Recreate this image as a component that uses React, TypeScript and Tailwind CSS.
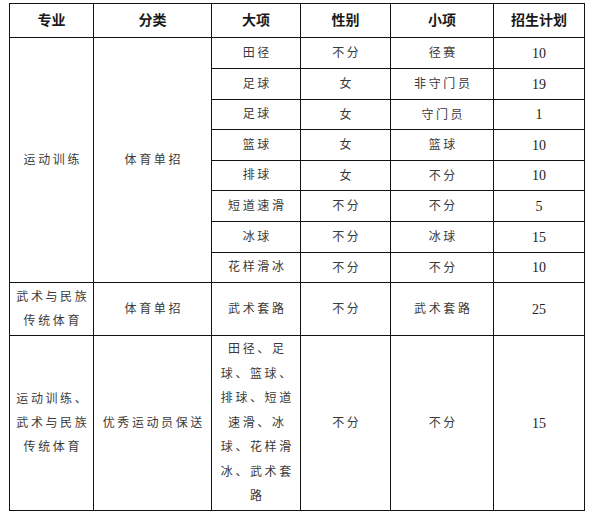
type Row = {
  major?: { text: string[]; span: number }
  kind?: { text: string; span: number }
  item: string[]
  gender: string
  sub: string
  plan: string
  h: string
}

const headers = ['专业', '分类', '大项', '性别', '小项', '招生计划']

const rows: Row[] = [
  { major: { text: ['运动训练'], span: 8 }, kind: { text: '体育单招', span: 8 }, item: ['田径'], gender: '不分', sub: '径赛', plan: '10', h: 'h-[31px]' },
  { item: ['足球'], gender: '女', sub: '非守门员', plan: '19', h: 'h-[31px]' },
  { item: ['足球'], gender: '女', sub: '守门员', plan: '1', h: 'h-[30px]' },
  { item: ['篮球'], gender: '女', sub: '篮球', plan: '10', h: 'h-[31px]' },
  { item: ['排球'], gender: '女', sub: '不分', plan: '10', h: 'h-[30px]' },
  { item: ['短道速滑'], gender: '不分', sub: '不分', plan: '5', h: 'h-[31px]' },
  { item: ['冰球'], gender: '不分', sub: '冰球', plan: '15', h: 'h-[31px]' },
  { item: ['花样滑冰'], gender: '不分', sub: '不分', plan: '10', h: 'h-[30px]' },
  {
    major: { text: ['武术与民族', '传统体育'], span: 1 },
    kind: { text: '体育单招', span: 1 },
    item: ['武术套路'],
    gender: '不分',
    sub: '武术套路',
    plan: '25',
    h: 'h-[53px]',
  },
  {
    major: { text: ['运动训练、', '武术与民族', '传统体育'], span: 1 },
    kind: { text: '优秀运动员保送', span: 1 },
    item: ['田径、足', '球、篮球、', '排球、短道', '速滑、冰', '球、花样滑', '冰、武术套', '路'],
    gender: '不分',
    sub: '不分',
    plan: '15',
    h: 'h-[175px]',
  },
]

const cell = 'border border-[#111] p-0 text-center align-middle'
// trailing letter-spacing pushes text left, so pad the left by the same amount
const cjk = 'pl-[2.6px] text-[12px] tracking-[2.6px] text-[#3a3a3a]'

export default function App() {
  return (
    <div className="min-h-[515px] w-[590px] bg-white pl-[9px] pt-[3px] font-['Liberation_Serif','Noto_Sans_CJK_SC',serif]">
      <table className="w-[575px] table-fixed border-collapse">
        <colgroup>
          <col className="w-[84px]" />
          <col className="w-[118px]" />
          <col className="w-[89px]" />
          <col className="w-[90px]" />
          <col className="w-[103px]" />
          <col className="w-[91px]" />
        </colgroup>
        <thead>
          <tr className="h-[34px]">
            {headers.map((h) => (
              <th key={h} className={`${cell} text-[14px] font-bold text-[#1a1a1a]`}>
                {h}
              </th>
            ))}
          </tr>
        </thead>
        <tbody>
          {rows.map((r, i) => (
            <tr key={i} className={r.h}>
              {r.major && (
                <td rowSpan={r.major.span} className={`${cell} ${cjk} leading-[24px]`}>
                  {r.major.text.map((t) => (
                    <div key={t}>{t}</div>
                  ))}
                </td>
              )}
              {r.kind && (
                <td rowSpan={r.kind.span} className={`${cell} ${cjk}`}>
                  {r.kind.text}
                </td>
              )}
              <td className={`${cell} ${cjk} leading-[24.5px]`}>
                {r.item.map((t) => (
                  <div key={t}>{t}</div>
                ))}
              </td>
              <td className={`${cell} ${cjk}`}>{r.gender}</td>
              <td className={`${cell} ${cjk}`}>{r.sub}</td>
              <td className={`${cell} text-[14px] text-[#222]`}>{r.plan}</td>
            </tr>
          ))}
        </tbody>
      </table>
    </div>
  )
}
